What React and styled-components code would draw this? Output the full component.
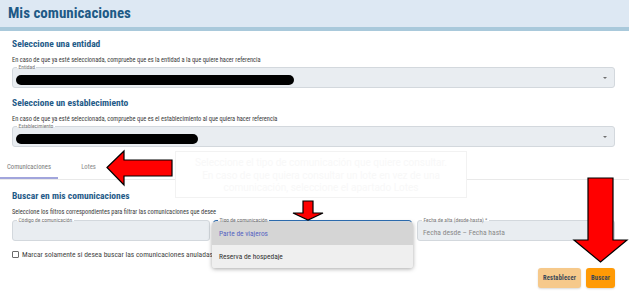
import React from "react";
import styled, { createGlobalStyle } from "styled-components";

const FONT = `"Roboto Condensed", "Liberation Sans Narrow", Roboto, sans-serif`;

const Global = createGlobalStyle`
  html, body { margin: 0; padding: 0; background: #ffffff; }
  body { font-family: ${FONT}; overflow: hidden; }
  * { box-sizing: border-box; }
`;

const Page = styled.div`
  position: relative;
  width: 629px;
  height: 300px;
  overflow: hidden;
  background: #ffffff;
  font-family: ${FONT};
`;

const Header = styled.header`
  height: 31px;
  background: #dde8f3;
  border-bottom: 4px solid #a9c9db;
  display: flex;
  align-items: center;
  padding-left: 8px;
`;

const Title = styled.h1`
  margin: 0;
  font-size: 15px;
  font-weight: 700;
  line-height: 27px;
  color: #1d5a86;
`;

const Section = styled.section`
  display: flex;
  flex-direction: column;
  padding: 0 14px 0 12px;
`;

const SectionTitle = styled.h2`
  margin: ${(p) => p.$mt}px 0 0;
  font-size: 9.5px;
  line-height: 12px;
  font-weight: 700;
  color: #1f5b88;
`;

const Hint = styled.p`
  margin: 6px 0 0;
  font-size: 6.4px;
  line-height: 8px;
  color: #3a3a3a;
  white-space: nowrap;
`;

const Field = styled.div`
  position: relative;
  margin-top: ${(p) => p.$mt || 0}px;
  height: 21px;
  display: flex;
  align-items: center;
  padding: 4px 7px 0 3px;
  background: #e9edf1;
  border: 1px solid ${(p) => (p.$focused ? "#2f6fb4" : "#d3d8dd")};
  border-radius: 3px;
`;

const Legend = styled.span`
  position: absolute;
  top: -4px;
  left: 4px;
  padding: 0 1.5px;
  font-size: 5.5px;
  line-height: 7px;
  color: #777;
  white-space: nowrap;
  background: linear-gradient(#ffffff 55%, #e9edf1 55%);
`;

const Redacted = styled.span`
  display: block;
  width: ${(p) => p.$w}px;
  height: 10px;
  border-radius: 5px;
  background: #000;
`;

const Caret = styled.span`
  margin-left: auto;
  width: 0;
  height: 0;
  border-left: 2px solid transparent;
  border-right: 2px solid transparent;
  border-top: 2.5px solid #6f6f6f;
  margin-top: -3px;
`;

const Placeholder = styled.span`
  margin-left: 2px;
  font-size: 7.6px;
  color: #8a8a8a;
  white-space: nowrap;
`;

const Tabs = styled.nav`
  position: relative;
  display: flex;
  height: 33px;
  border-bottom: 1px solid #e9e9e9;
`;

const Tab = styled.div`
  width: ${(p) => p.$w}px;
  height: 32px;
  padding-top: 16px;
  text-align: center;
  font-size: 6.7px;
  line-height: 9px;
  color: ${(p) => (p.$active ? "#7a7a7a" : "#888")};
  border-bottom: 2px solid ${(p) => (p.$active ? "#a1a5dc" : "transparent")};
`;

const Tooltip = styled.div`
  position: absolute;
  left: 175px;
  top: 4px;
  width: 292px;
  height: 47px;
  padding-top: 5px;
  background: #ffffff;
  border: 1px solid #f2f2f2;
  text-align: center;
  font-family: Roboto, sans-serif;
  font-size: 10px;
  line-height: 12.5px;
  color: #f8f8f8;
`;

const FieldGrid = styled.div`
  margin-top: 4px;
  display: grid;
  grid-template-columns: 198px 199px 1fr;
  column-gap: 3px;
  & > :last-child { margin-left: 2px; }
`;

const Menu = styled.ul`
  position: absolute;
  top: 1px;
  left: -2px;
  right: -2px;
  margin: 0;
  padding: 0;
  list-style: none;
  background: #efefef;
  border-radius: 3px;
  box-shadow: 0 1px 4px rgba(0, 0, 0, 0.35);
  overflow: hidden;
  z-index: 2;
`;

const MenuItem = styled.li`
  height: 23px;
  display: flex;
  align-items: center;
  padding-left: 7px;
  font-size: 7.4px;
  color: ${(p) => (p.$selected ? "#5663c2" : "#333")};
  background: ${(p) => (p.$selected ? "#d5d5d5" : "#efefef")};
`;

const CheckRow = styled.label`
  margin-top: 9px;
  display: flex;
  align-items: center;
  gap: 3px;
  height: 9px;
`;

const Box = styled.span`
  width: 7px;
  height: 7px;
  border: 1px solid #6b6b6b;
  border-radius: 1px;
  background: #fff;
`;

const CheckLabel = styled.span`
  font-size: 7.5px;
  color: #444;
  white-space: nowrap;
`;

const Actions = styled.div`
  margin-top: 9px;
  display: flex;
  justify-content: flex-end;
  gap: 5px;
`;

const Button = styled.button`
  height: 20px;
  width: ${(p) => p.$w}px;
  padding: 0;
  border: none;
  border-radius: 3px;
  font-family: ${FONT};
  font-size: 6.5px;
  font-weight: 700;
  letter-spacing: 0.2px;
  color: #3a4757;
  background: ${(p) => (p.$soft ? "#f6c98b" : "#ff9a05")};
  box-shadow: 0 1px 2px rgba(0, 0, 0, 0.15);
`;

const Annotation = styled.svg`
  position: absolute;
  left: ${(p) => p.$x}px;
  top: ${(p) => p.$y}px;
  overflow: visible;
  z-index: 5;
`;

const ArrowShape = ({ points }) => (
  <polygon points={points} fill="#ff0000" stroke="#000" strokeWidth="1.2" strokeLinejoin="miter" />
);

export default function App() {
  return (
    <Page>
      <Global />
      <Header>
        <Title>Mis comunicaciones</Title>
      </Header>

      <Section>
        <SectionTitle $mt={7}>Seleccione una entidad</SectionTitle>
        <Hint>En caso de que ya esté seleccionada, compruebe que es la entidad a la que quiere hacer referencia</Hint>
        <Field $mt={3}>
          <Legend>Entidad</Legend>
          <Redacted $w={278} />
          <Caret />
        </Field>

        <SectionTitle $mt={9}>Seleccione un establecimiento</SectionTitle>
        <Hint>En caso de que ya esté seleccionada, compruebe que es el establecimiento al que quiera hacer referencia</Hint>
        <Field $mt={3}>
          <Legend>Establecimiento</Legend>
          <Redacted $w={182} />
          <Caret />
        </Field>
      </Section>

      <Tabs>
        <Tab $w={58} $active>Comunicaciones</Tab>
        <Tab $w={61}>Lotes</Tab>
        <Tooltip>
          Seleccione el tipo de comunicación que quiere consultar.
          <br />
          En caso de que quiera consultar un lote en vez de una
          <br />
          comunicación, seleccione el apartado Lotes
        </Tooltip>
      </Tabs>

      <Section>
        <SectionTitle $mt={10}>Buscar en mis comunicaciones</SectionTitle>
        <Hint>Seleccione los filtros correspondientes para filtrar las comunicaciones que desee</Hint>
        <FieldGrid>
          <Field>
            <Legend>Código de comunicación</Legend>
          </Field>
          <Field $focused>
            <Legend>Tipo de comunicación</Legend>
            <Menu>
              <MenuItem $selected>Parte de viajeros</MenuItem>
              <MenuItem>Reserva de hospedaje</MenuItem>
            </Menu>
          </Field>
          <Field>
            <Legend>Fecha de alta (desde-hasta) *</Legend>
            <Placeholder>Fecha desde – Fecha hasta</Placeholder>
          </Field>
        </FieldGrid>
        <CheckRow>
          <Box />
          <CheckLabel>Marcar solamente si desea buscar las comunicaciones anuladas</CheckLabel>
        </CheckRow>
        <Actions>
          <Button $soft $w={43}>Restablecer</Button>
          <Button $w={29}>Buscar</Button>
        </Actions>
      </Section>

      <Annotation $x={105} $y={149} width="70" height="39">
        <ArrowShape points="2,18.5 19,2 19,11 67,11 67,27 19,27 19,36" />
      </Annotation>
      <Annotation $x={290} $y={200} width="34" height="22">
        <ArrowShape points="13,1 23,1 23,13 33,13 18,20 3,13 13,13" />
      </Annotation>
      <Annotation $x={572} $y={176} width="57" height="88">
        <ArrowShape points="16,2 41,2 41,64 55,64 28.5,86 2,64 16,64" />
      </Annotation>
    </Page>
  );
}
